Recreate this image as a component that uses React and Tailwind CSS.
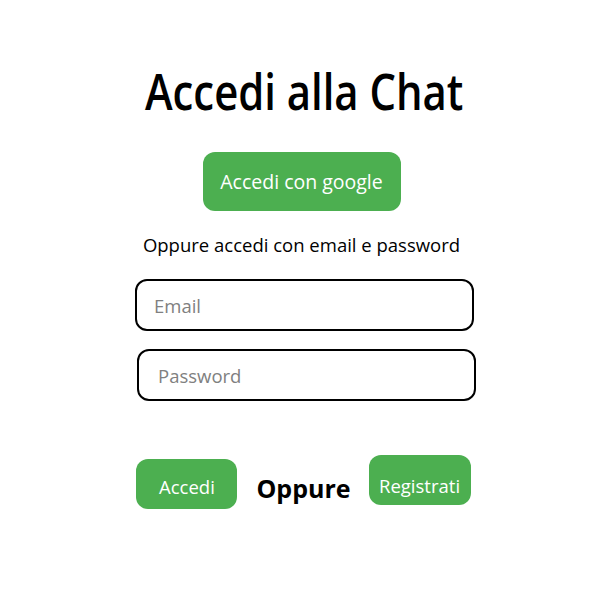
import React from "react";

const App = () => {
  return (
    <div
      className="w-[603px] h-[603px] bg-white flex flex-col items-center"
      style={{ fontFamily: '"Open Sans", "Noto Sans", sans-serif' }}
    >
      <h1 className="mt-[60px] ml-[6px] text-[51px] leading-[60px] font-semibold text-black scale-x-[0.82]">
        Accedi alla Chat
      </h1>

      <button className="mt-[32px] w-[198px] h-[59px] bg-[#4CAF50] text-white text-[19.5px] rounded-[12px]">
        Accedi con google
      </button>

      <p className="mt-[22px] text-[18.5px] leading-[24px] text-black">
        Oppure accedi con email e password
      </p>

      <div className="mt-[22px] ml-[8px] flex flex-col gap-[18px]">
        <input
          type="email"
          placeholder="Email"
          className="w-[339px] h-[52px] border-2 border-black rounded-[12px] px-[17px] text-[18.5px] placeholder:text-[#808080] outline-none"
        />
        <input
          type="password"
          placeholder="Password"
          className="ml-[2px] w-[339px] h-[52px] border-2 border-black rounded-[12px] px-[19px] text-[18.5px] placeholder:text-[#808080] outline-none"
        />
      </div>

      <div className="mt-[54px] ml-[4px] flex items-start">
        <button className="mt-[4px] w-[101px] h-[50px] pt-[5px] bg-[#4CAF50] text-white text-[18.5px] rounded-[12px]">
          Accedi
        </button>
        <span className="ml-[19px] mt-[18px] text-[25px] font-bold text-black leading-[30px]">Oppure</span>
        <button className="ml-[18px] w-[102px] h-[50px] pt-[11px] bg-[#4CAF50] text-white text-[18.5px] rounded-[12px]">
          Registrati
        </button>
      </div>
    </div>
  );
};

export default App;
